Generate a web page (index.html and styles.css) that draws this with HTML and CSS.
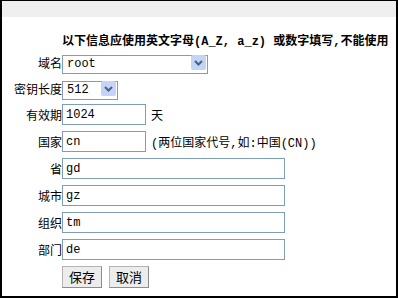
FILE: index.html
```html
<!DOCTYPE html>
<html lang="zh-CN">
<head>
<meta charset="utf-8"/>
<title>证书信息</title>
<link rel="stylesheet" href="styles.css">
</head>
<body>
<div class="frame">
  <div class="topbar"></div>
  <div class="notice">以下信息应使用英文字母<span class="ascii">(A_Z, a_z) </span>或数字填写<span class="ascii">,</span>不能使用</div>
  <form class="form">
    <div class="row row-first">
      <label>域名</label>
      <span class="select-wrap wide">
        <select><option>root</option></select>
        <svg class="arrow" width="15" height="15" viewBox="0 0 15 15"><rect x="0" y="0" width="15" height="15" rx="2" fill="#c4d4f6"/><path d="M4 6 L7.5 9.5 L11 6" fill="none" stroke="#4d6185" stroke-width="2"/></svg>
      </span>
    </div>
    <div class="row row-short">
      <label>密钥长度</label>
      <span class="select-wrap narrow">
        <select><option>512</option></select>
        <svg class="arrow" width="15" height="15" viewBox="0 0 15 15"><rect x="0" y="0" width="15" height="15" rx="2" fill="#c4d4f6"/><path d="M4 6 L7.5 9.5 L11 6" fill="none" stroke="#4d6185" stroke-width="2"/></svg>
      </span>
    </div>
    <div class="row">
      <label>有效期</label>
      <input class="short" type="text" value="1024"/>
      <span class="note">天</span>
    </div>
    <div class="row">
      <label>国家</label>
      <input class="short" type="text" value="cn"/>
      <span class="note"><span class="ascii">(</span>两位国家代号<span class="ascii">,</span>如<span class="ascii">:</span>中国<span class="ascii">(CN))</span></span>
    </div>
    <div class="row">
      <label>省</label>
      <input class="long" type="text" value="gd"/>
    </div>
    <div class="row">
      <label>城市</label>
      <input class="long" type="text" value="gz"/>
    </div>
    <div class="row">
      <label>组织</label>
      <input class="long" type="text" value="tm"/>
    </div>
    <div class="row">
      <label>部门</label>
      <input class="long" type="text" value="de"/>
    </div>
    <div class="row buttons">
      <label></label>
      <button type="button">保存</button>
      <button type="button">取消</button>
    </div>
  </form>
</div>
</body>
</html>
```

FILE: styles.css
```css
body {
  margin: 0;
  background: #fff;
  font-family: "Noto Sans CJK SC", "Liberation Sans", sans-serif;
  font-size: 12px;
  color: #000;
}
.frame {
  width: 398px;
  height: 298px;
  box-sizing: border-box;
  border: 2px solid #000;
  border-top-width: 1px;
  overflow: hidden;
}
.topbar {
  height: 16px;
  background: #efefef;
}
.notice {
  padding: 15px 0 0 60px;
  height: 17px;
  line-height: 16px;
  font-size: 12px;
  font-weight: bold;
  white-space: nowrap;
}
.ascii {
  font-family: "Liberation Mono", monospace;
}
.row {
  display: flex;
  align-items: center;
  height: 27px;
}
.row-short {
  height: 25px;
}
.row label {
  width: 60px;
  flex-shrink: 0;
  text-align: right;
  line-height: 14px;
}
.select-wrap {
  position: relative;
  display: inline-block;
  height: 19px;
}
.select-wrap.wide {
  width: 146px;
}
.select-wrap.narrow {
  width: 56px;
}
.select-wrap select {
  appearance: none;
  -webkit-appearance: none;
  width: 100%;
  height: 19px;
  margin: 0;
  padding: 0 0 0 4px;
  border: 1px solid #7f9db9;
  border-radius: 0;
  background: #fff;
  font-family: "Liberation Mono", monospace;
  font-size: 12px;
  color: #000;
}
.arrow {
  position: absolute;
  top: 2px;
  right: 2px;
  pointer-events: none;
}
input {
  box-sizing: border-box;
  height: 21px;
  margin: 0;
  padding: 0 3px;
  border: 1px solid #7f9db9;
  font-family: "Liberation Mono", monospace;
  font-size: 12px;
  color: #000;
}
input.short {
  width: 84px;
}
input.long {
  width: 223px;
}
.note {
  margin-left: 5px;
}
.buttons button {
  width: 40px;
  height: 22px;
  margin: 0 7px 0 0;
  padding: 0;
  background: #ececec;
  border: 1px solid #b4b4b4;
  border-right-color: #8c8c8c;
  border-bottom-color: #8c8c8c;
  font-family: "Noto Sans CJK SC", sans-serif;
  font-size: 13px;
  color: #000;
}
```
